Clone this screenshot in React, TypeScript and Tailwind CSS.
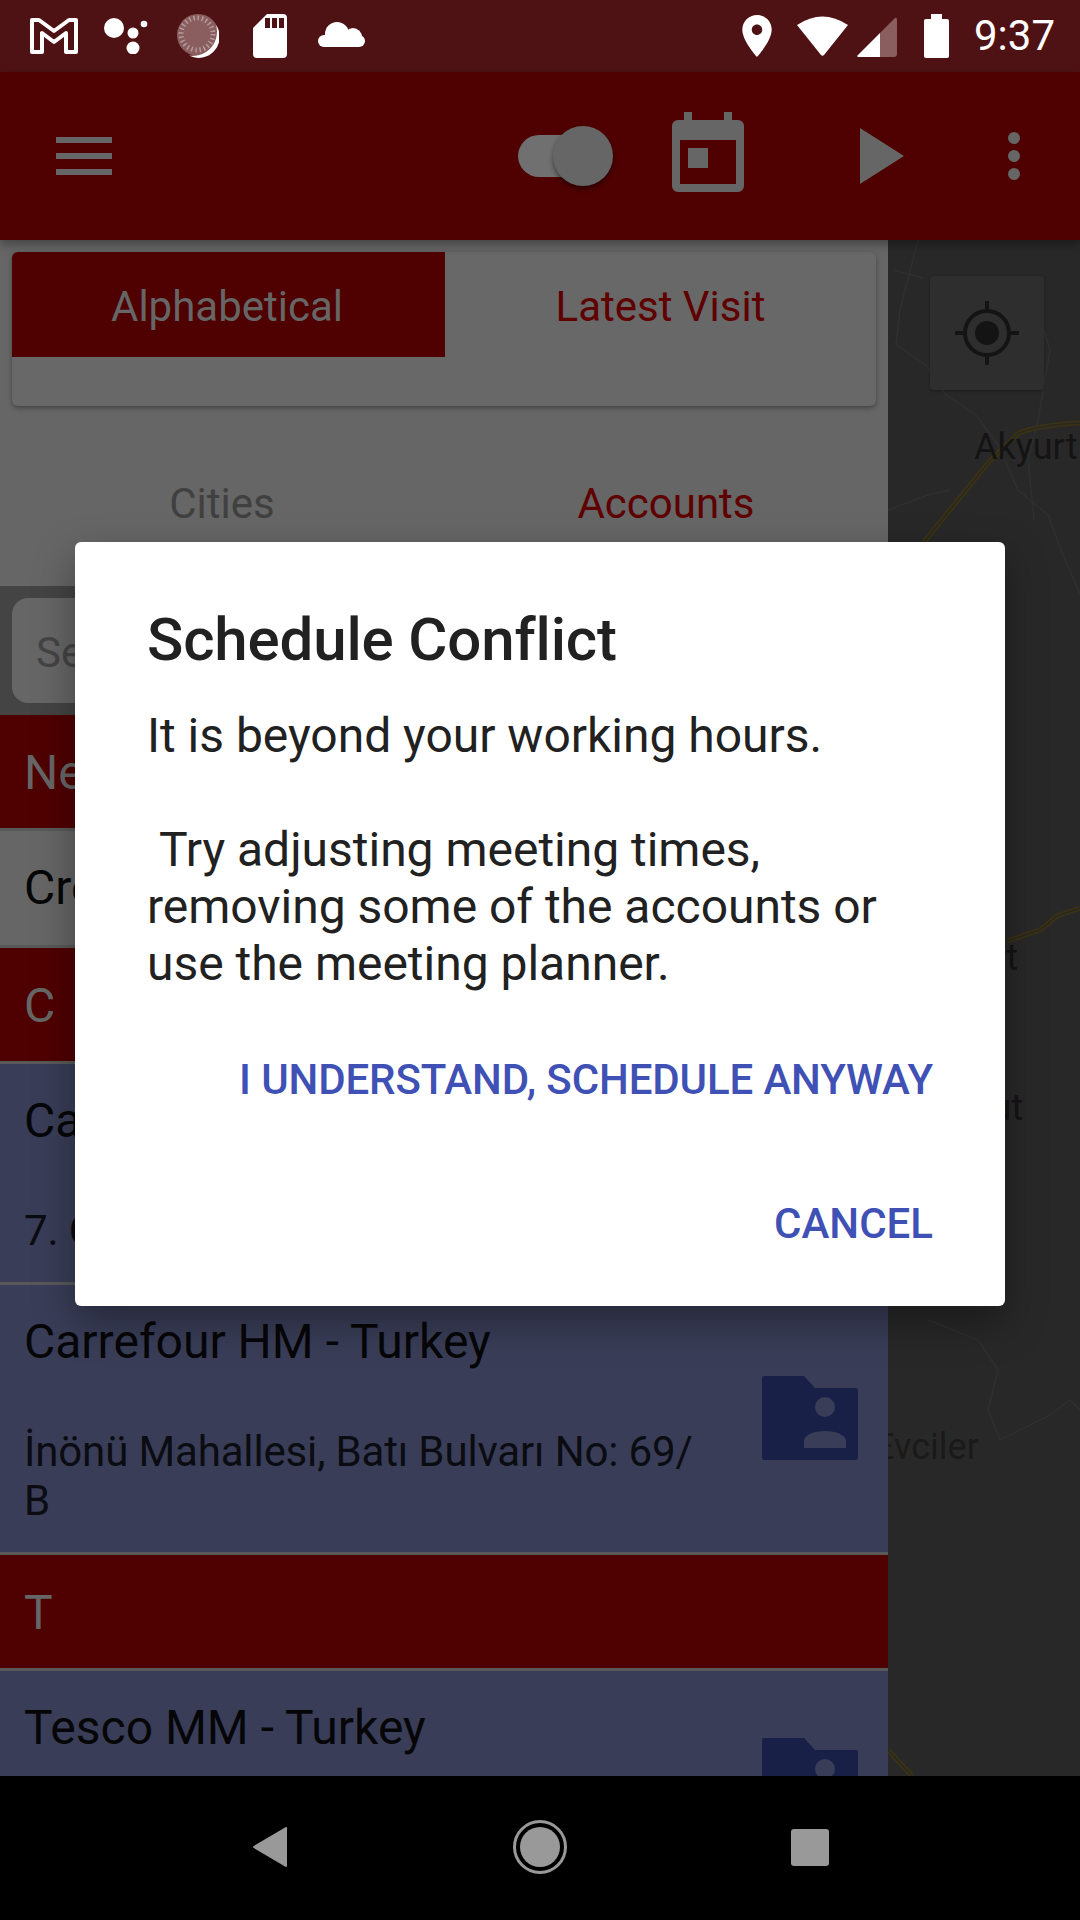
const FolderIcon = () => (
  <svg viewBox="0 0 96 84" className="w-[96px] h-[84px] shrink-0 -mt-[6px]" fill="#182048">
    <path
      fillRule="evenodd"
      d="M2 0h40l11 12h41a2 2 0 0 1 2 2v68a2 2 0 0 1-2 2H2a2 2 0 0 1-2-2V2a2 2 0 0 1 2-2zM63 21a10 10 0 1 0 0 20 10 10 0 0 0 0-20zM42 72h42v-7c0-6-10-10-21-10s-21 4-21 10z"
    />
  </svg>
);

const StatusLeft = () => (
  <div className="flex items-center">
    <svg viewBox="0 0 48 36" className="w-[48px] h-[36px]" fill="none" stroke="#fff" strokeWidth="4" strokeLinejoin="round">
      <path d="M2 2h7L24 13 39 2h7v32H36V15L24 24 12 15v19H2z" />
    </svg>
    <svg viewBox="0 0 46 36" className="w-[46px] h-[36px] ml-[26px]" fill="#fff">
      <circle cx="10" cy="10" r="10" />
      <circle cx="29" cy="15" r="5.5" />
      <circle cx="40" cy="6" r="3.3" />
      <circle cx="29" cy="30" r="6.5" />
    </svg>
    <svg viewBox="0 0 42 44" className="w-[42px] h-[44px] ml-[27px]">
      <circle cx="21" cy="21" r="21" fill="#8a5d5f" />
      <circle cx="20" cy="20" r="16" fill="none" stroke="#b59a9b" strokeWidth="5" strokeDasharray="1.5 2.69" />
      <path d="M39 11A21 21 0 0 1 12 41.500A24 24 0 0 0 39 11z" fill="#fff" />
    </svg>
    <svg viewBox="0 0 34 44" className="w-[34px] h-[44px] ml-[34px]" fill="#fff">
      <path d="M14 0h16a4 4 0 0 1 4 4v36a4 4 0 0 1-4 4H4a4 4 0 0 1-4-4V14z" />
      <rect x="12" y="4" width="5" height="10" fill="#4f1214" />
      <rect x="19" y="4" width="5" height="10" fill="#4f1214" />
      <rect x="26" y="4" width="5" height="10" fill="#4f1214" />
    </svg>
    <svg viewBox="0 0 47 25" className="w-[47px] h-[25px] ml-[31px] -mt-[3px]" fill="#fff">
      <circle cx="19" cy="12" r="12" />
      <circle cx="35" cy="15" r="9" />
      <rect x="0" y="13" width="47" height="12" rx="6" />
    </svg>
  </div>
);

const StatusRight = () => (
  <div className="flex items-center">
    <svg viewBox="5 2 14 20" className="w-[30px] h-[42px]" fill="#fff">
      <path d="M12 2C8.13 2 5 5.13 5 9c0 5.25 7 13 7 13s7-7.75 7-13c0-3.87-3.13-7-7-7zm0 9.5c-1.38 0-2.5-1.12-2.5-2.5s1.12-2.5 2.5-2.5 2.5 1.12 2.5 2.5-1.12 2.5-2.5 2.5z" />
    </svg>
    <svg viewBox="0 0 51 41" className="w-[51px] h-[41px] ml-[25px] -mt-[2px]" fill="#fff">
      <path d="M0 10Q25.5-7 51 10L27 40q-1.500 1.500-3 0z" />
    </svg>
    <svg viewBox="0 0 40 40" className="w-[40px] h-[40px] ml-[9px] mt-[2px]">
      <path d="M0 39 23 16v24H1z" fill="#fff" />
      <path d="M23 16 38 1q2-1 2 2v34a3 3 0 0 1-3 3H23z" fill="#8a5d5f" />
    </svg>
    <svg viewBox="0 0 25 44" className="w-[25px] h-[44px] ml-[27px]" fill="#fff">
      <rect x="7" y="0" width="11" height="6" />
      <rect x="0" y="5" width="25" height="39" rx="2" />
    </svg>
    <span className="ml-[25px] mr-[25px] text-[42px] leading-[50px] text-white">9:37</span>
  </div>
);

const AppBar = () => (
  <header className="relative z-20 h-[168px] bg-[#4f0000] flex items-center shadow-[0_4px_10px_rgba(0,0,0,0.35)]">
    <div className="ml-[56px] w-[56px] flex flex-col gap-[10px]">
      <div className="h-[6px] bg-[#666666]" />
      <div className="h-[6px] bg-[#666666]" />
      <div className="h-[6px] bg-[#666666]" />
    </div>
    <div className="relative ml-[406px] w-[95px] h-[60px]">
      <div className="absolute left-0 top-[9px] w-[80px] h-[42px] rounded-full bg-[#707070]" />
      <div className="absolute right-0 top-0 w-[60px] h-[60px] rounded-full bg-[#666666] shadow-[0_3px_5px_rgba(0,0,0,0.45)]" />
    </div>
    <svg viewBox="0 0 72 80" className="ml-[59px] -mt-[8px] w-[72px] h-[80px]">
      <path d="M12 0h8v8h32V0h8v8h6a6 6 0 0 1 6 6v60a6 6 0 0 1-6 6H6a6 6 0 0 1-6-6V14a6 6 0 0 1 6-6h6z" fill="#666666" />
      <rect x="8" y="28" width="56" height="44" fill="#4f0000" />
      <rect x="16" y="36" width="20" height="20" fill="#666666" />
    </svg>
    <svg viewBox="0 0 44 56" className="ml-[116px] w-[44px] h-[56px]" fill="#666666">
      <path d="M0 0 44 28 0 56z" />
    </svg>
    <div className="ml-[104px] w-[12px] flex flex-col gap-[6px]">
      <div className="h-[12px] rounded-full bg-[#666666]" />
      <div className="h-[12px] rounded-full bg-[#666666]" />
      <div className="h-[12px] rounded-full bg-[#666666]" />
    </div>
  </header>
);

const SectionHeader = ({ label }: { label: string }) => (
  <div className="h-[113px] shrink-0 bg-[#4f0000] flex items-center px-[24px] pt-[2px] text-[48px] text-[#666666]">{label}</div>
);

const Divider = () => <div className="h-[3px] shrink-0 bg-[#595959]" />;

const AccountRow = ({ name, address }: { name: string; address: string }) => (
  <div className="shrink-0 bg-[#393d57] flex items-center pl-[24px] pr-[30px] pt-[32px] pb-[27px]">
    <div className="flex-1 pr-[50px]">
      <div className="text-[48px] leading-[50px] text-[#060608]">{name}</div>
      <div className="mt-[60px] text-[42px] leading-[49px] tracking-[-0.15px] text-[#0b0c12]">{address}</div>
    </div>
    <FolderIcon />
  </div>
);

const ListPanel = () => (
  <section className="relative z-10 w-[888px] shrink-0 h-full bg-[#666666] flex flex-col overflow-hidden">
    <div className="mx-[12px] mt-[12px] h-[154px] shrink-0 rounded-[6px] bg-[#686868] shadow-[0_2px_5px_rgba(0,0,0,0.35)] overflow-hidden">
      <div className="flex h-[105px] text-[42px]">
        <div className="w-[433px] bg-[#4f0000] text-[#666666] flex items-center justify-center pt-[4px] pr-[3px]">Alphabetical</div>
        <div className="flex-1 text-[#5f0000] flex items-center justify-center pt-[4px]">Latest Visit</div>
      </div>
    </div>
    <div className="h-[180px] shrink-0 grid grid-cols-2 text-[42px] pt-[14px]">
      <div className="flex items-center justify-center text-[#404040]">Cities</div>
      <div className="flex items-center justify-center text-[#5f0000]">Accounts</div>
    </div>
    <div className="h-[129px] shrink-0 bg-[#444444] px-[12px] py-[12px]">
      <div className="h-[105px] rounded-[16px] bg-[#666666] flex items-center pl-[24px] pt-[4px] text-[42px] text-[#444444]">Search</div>
    </div>
    <SectionHeader label="New" />
    <Divider />
    <div className="h-[114px] shrink-0 bg-[#666666] flex items-center px-[24px] text-[48px] text-[#060606]">Create New</div>
    <Divider />
    <SectionHeader label="C" />
    <Divider />
    <AccountRow name="Carrefour MM - Turkey" address="7. Cadde No: 12" />
    <Divider />
    <AccountRow name="Carrefour HM - Turkey" address={"İnönü Mahallesi, Batı Bulvarı No: 69/\u200bB"} />
    <Divider />
    <SectionHeader label="T" />
    <Divider />
    <AccountRow name="Tesco MM - Turkey" address={"\u00a0"} />
  </section>
);

const MapPanel = () => (
  <section className="relative flex-1 h-full bg-[#292828]">
    <svg viewBox="0 0 192 1536" className="absolute inset-0 w-[192px] h-[1536px]" fill="none">
      <g stroke="#302f2f" strokeWidth="1.500">
        <path d="M30 0 12 70 8 105l30 20 20 30 30 20 22 30 20 45 30 25 15 40 22 50" />
        <path d="M0 270l40-15 22-5" />
        <path d="M150 70l12 40-12 70-10 40 6 60" />
        <path d="M5 30l30 8M40 1080l50 20 20 30-10 40 12 30 50-25 20-15 20 20" />
      </g>
      <g stroke="#3a3215" strokeWidth="5">
        <path d="M36 302 100 223l31-30q20-8 61-10" />
        <path d="M119 701l33-11 17-14 23-8" />
        <path d="M0 1510l24 26" />
      </g>
      <g stroke="#2a2820" strokeWidth="1.500">
        <path d="M36 302 100 223l31-30q20-8 61-10" />
        <path d="M119 701l33-11 17-14 23-8" />
        <path d="M0 1510l24 26" />
      </g>
    </svg>
    <div className="absolute left-[42px] top-[36px] w-[114px] h-[114px] rounded-[4px] bg-[#2e2e2e] flex items-center justify-center shadow-[0_1px_3px_rgba(0,0,0,0.3)]">
      <svg viewBox="0 0 64 64" className="w-[64px] h-[64px]" fill="none" stroke="#141414" strokeWidth="4">
        <circle cx="32" cy="32" r="22" />
        <circle cx="32" cy="32" r="12" fill="#141414" stroke="none" />
        <path d="M32 0v10M32 54v10M0 32h10M54 32h10" />
      </svg>
    </div>
    <span className="absolute left-[86px] top-[186px] text-[36px] leading-[42px] text-[#141414]">Akyurt</span>
    <span className="absolute right-[62px] top-[697px] text-[36px] leading-[42px] text-[#141414]">rt</span>
    <span className="absolute right-[57px] top-[847px] text-[36px] leading-[42px] text-[#141414]">ut</span>
    <span className="absolute left-[-14px] top-[1186px] text-[36px] leading-[42px] text-[#1a1a1a]">Evciler</span>
  </section>
);

const NavBar = () => (
  <nav className="h-[144px] shrink-0 bg-black flex items-center relative z-20 pb-[2px]">
    <svg viewBox="0 0 34 40" className="ml-[253px] w-[34px] h-[40px]" fill="#999999" stroke="#999999" strokeWidth="2" strokeLinejoin="round">
      <path d="M1 20 33 1v38z" />
    </svg>
    <svg viewBox="0 0 54 54" className="ml-[226px] w-[54px] h-[54px]">
      <circle cx="27" cy="27" r="25.500" fill="none" stroke="#999999" strokeWidth="3" />
      <circle cx="27" cy="27" r="20" fill="#999999" />
    </svg>
    <div className="ml-[224px] w-[38px] h-[37px] rounded-[3px] bg-[#999999]" />
  </nav>
);

const ConflictDialog = () => (
  <div className="absolute z-30 left-[75px] top-[542px] w-[930px] h-[764px] rounded-[6px] bg-white shadow-[0_16px_40px_rgba(0,0,0,0.35)] pt-[63px]">
    <h2 className="pl-[72px] text-[60px] leading-[70px] tracking-[-0.15px] font-medium text-[#212121]">Schedule Conflict</h2>
    <div className="mt-[32px] px-[72px] text-[48px] leading-[57px] tracking-[-0.02px] text-[#212121]">
      <p>It is beyond your working hours.</p>
      <p className="mt-[57px] whitespace-pre-wrap">{" Try adjusting meeting times, removing some of the accounts or use the meeting planner."}</p>
    </div>
    <div className="mt-[15px] pr-[72px] flex flex-col items-end text-[42px] font-medium text-[#3f51b5]">
      <div className="h-[144px] flex items-center tracking-[-0.12px]">I UNDERSTAND, SCHEDULE ANYWAY</div>
      <div className="h-[144px] flex items-center">CANCEL</div>
    </div>
  </div>
);

export default function App() {
  return (
    <div className="relative w-[1080px] h-[1920px] overflow-hidden flex flex-col bg-black font-['Roboto',sans-serif]">
      <div className="relative z-20 h-[72px] shrink-0 bg-[#4f1214] flex items-center justify-between pl-[30px]">
        <StatusLeft />
        <StatusRight />
      </div>
      <AppBar />
      <main className="h-[1536px] shrink-0 flex">
        <ListPanel />
        <MapPanel />
      </main>
      <NavBar />
      <ConflictDialog />
    </div>
  );
}
